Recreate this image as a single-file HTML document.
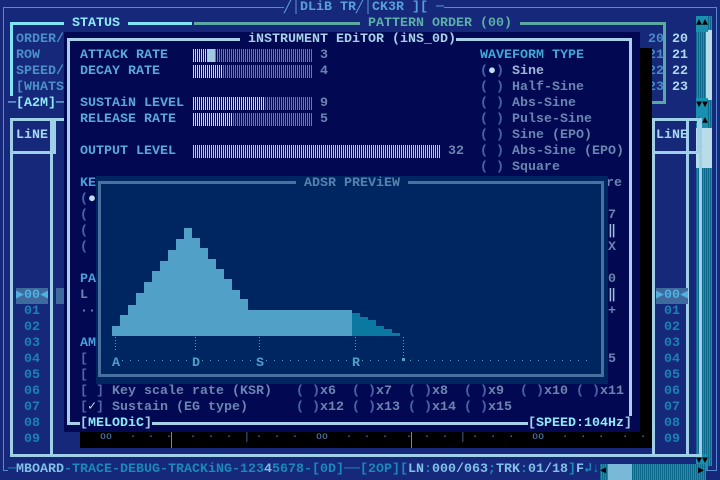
<!DOCTYPE html>
<html><head><meta charset="utf-8"><style>
*{margin:0;padding:0;box-sizing:border-box}
body{width:720px;height:480px;background:#16287a;position:relative;overflow:hidden;font-family:"Liberation Mono","DejaVu Sans Mono",monospace;font-size:13.33px;line-height:16px;font-weight:bold}
.a{position:absolute;white-space:pre}
.b{position:absolute}
.bar{position:absolute;height:13px}
</style></head><body>
<!-- outer frame -->
<div class="b" style="left:3px;top:7px;width:714px;height:464px;border:1px solid #5a88d0"></div>
<div class="a" style="left:284px;top:0;background:#16287a;color:#5aa0d8">╱│DLiB TR╱│CK3R ][ ─</div>
<!-- status box -->
<div class="b" style="left:10px;top:22px;width:180px;height:82px;border:3px solid #80e4f4;border-bottom:none;border-right:none"></div>
<div class="b" style="left:10px;top:22px;width:182px;height:3px;background:#80e4f4"></div>
<div class="a" style="left:64px;top:16px;padding:0 8px;background:#16287a;color:#90e8f8">STATUS</div>
<div class="a" style="left:16px;top:32px;color:#4a90c8">ORDER/
ROW
SPEED/
[WHATS</div>
<div class="a" style="left:8px;top:96px;color:#90e8f8;background:#16287a">─[A2M]─</div>
<!-- pattern order box -->
<div class="b" style="left:194px;top:22px;width:472px;height:82px;border:3px solid #5aa8a0;border-left:none"></div>
<div class="a" style="left:360px;top:16px;padding:0 8px;background:#16287a;color:#5ab0a8">PATTERN ORDER (00)</div>
<div class="a" style="left:648px;top:32px;color:#4a8ac8">20
21
22
23</div>
<div class="a" style="left:672px;top:32px;color:#b0d8f0">20
21
22
23</div>
<!-- right scrollbar -->
<div class="b" style="left:696px;top:16px;width:16px;height:450px;background:repeating-linear-gradient(90deg,#0e6a8c 0 1px,#1a90b0 1px 2px)"></div>
<div class="b" style="left:706px;top:30px;width:6px;height:70px;background:#b8dce8"></div>
<div class="a" style="left:696px;top:16px;font-size:10px;color:#000;background:#1a90b0">▲▲</div>
<div class="a" style="left:696px;top:98px;font-size:10px;color:#000;background:#1a90b0">▼▼</div>
<div class="a" style="left:696px;top:114px;font-size:10px;color:#000;background:#1a90b0">▲▲</div>
<div class="b" style="left:696px;top:128px;width:16px;height:40px;background:#b8dce8"></div>
<div class="a" style="left:696px;top:454px;font-size:10px;color:#000;background:#1a90b0">▼▼</div>
<!-- lower pattern area -->
<div class="b" style="left:10px;top:118px;width:692px;height:339px;border:3px solid #a0d0e8"></div>
<div class="b" style="left:10px;top:118px;width:46px;height:36px;border:3px solid #a0d0e8"></div>
<div class="b" style="left:50px;top:118px;width:3px;height:339px;background:#a0d0e8"></div>
<div class="a" style="left:16px;top:128px;color:#a8d8f0">LiNE</div>
<div class="b" style="left:652px;top:118px;width:48px;height:36px;border:3px solid #a0d0e8"></div>
<div class="b" style="left:652px;top:118px;width:3px;height:339px;background:#a0d0e8"></div>
<div class="b" style="left:686px;top:118px;width:3px;height:339px;background:#a0d0e8"></div>
<div class="a" style="left:656px;top:128px;color:#a8d8f0">LiNE</div>
<div class="b" style="left:16px;top:288px;width:32px;height:16px;background:#3e6a9e"></div>
<div class="a" style="left:16px;top:288px;color:#50b0e0">▶00◀</div>
<div class="a" style="left:24px;top:304px;color:#1a80b8">01
02
03
04
05
06
07
08
09</div>
<div class="b" style="left:656px;top:288px;width:32px;height:16px;background:#3e6a9e"></div>
<div class="a" style="left:656px;top:288px;color:#50b0e0">▶00◀</div>
<div class="a" style="left:664px;top:304px;color:#1a80b8">01
02
03
04
05
06
07
08
09</div>
<div class="b" style="left:56px;top:288px;width:8px;height:16px;background:#3e6a9e"></div>
<!-- shadows -->
<div class="b" style="left:640px;top:48px;width:12px;height:400px;background:#000"></div>
<div class="b" style="left:80px;top:432px;width:572px;height:16px;background:#000"></div>
<div class="a" style="left:88px;top:430px;color:#5a88c8;font-size:10px;font-weight:normal">  oo   ·  ·  ·   ·  ·  ·  │ ·  ·  ·   oo   ·  ·  ·   ·  ·  ·  │ ·  ·  ·   oo   ·  ·  ·   ·  ·</div>
<div class="b" style="left:171px;top:432px;width:1px;height:16px;background:#5a88c8"></div>
<div class="b" style="left:411px;top:432px;width:1px;height:16px;background:#5a88c8"></div>
<!-- dialog -->
<div class="b" style="left:64px;top:32px;width:576px;height:400px;background:#020852"></div>
<div class="b" style="left:67px;top:38px;width:3px;height:387px;background:#a8d0e8"></div>
<div class="b" style="left:67px;top:38px;width:173px;height:3px;background:#a8d0e8"></div>
<div class="b" style="left:432px;top:38px;width:200px;height:3px;background:#a8d0e8"></div>
<div class="b" style="left:629px;top:38px;width:3px;height:387px;background:#a8d0e8"></div>
<div class="b" style="left:67px;top:422px;width:565px;height:3px;background:#a8d0e8"></div>
<div class="a" style="left:248px;top:32px;color:#a8d0e8;background:#020852">iNSTRUMENT EDiTOR (iNS_0D)</div>
<div class="a" style="left:80px;top:48px;color:#5aa8d8">ATTACK RATE
DECAY RATE

SUSTAiN LEVEL
RELEASE RATE

OUTPUT LEVEL</div>
<div class="bar" style="left:193px;top:49px;width:120px;background:repeating-linear-gradient(90deg,#5a7ec0 0 1px,transparent 1px 2px)"></div>
<div class="bar" style="left:193px;top:49px;width:14px;background:repeating-linear-gradient(90deg,#c0d8f0 0 1px,transparent 1px 2px)"></div>
<div class="bar" style="left:207px;top:49px;width:8px;background:#a0c8e0"></div>
<div class="bar" style="left:193px;top:65px;width:120px;background:repeating-linear-gradient(90deg,#5a7ec0 0 1px,transparent 1px 2px)"></div>
<div class="bar" style="left:193px;top:65px;width:30px;background:repeating-linear-gradient(90deg,#c0d8f0 0 1px,transparent 1px 2px)"></div>
<div class="bar" style="left:193px;top:97px;width:120px;background:repeating-linear-gradient(90deg,#5a7ec0 0 1px,transparent 1px 2px)"></div>
<div class="bar" style="left:193px;top:97px;width:72px;background:repeating-linear-gradient(90deg,#c0d8f0 0 1px,transparent 1px 2px)"></div>
<div class="bar" style="left:193px;top:113px;width:120px;background:repeating-linear-gradient(90deg,#5a7ec0 0 1px,transparent 1px 2px)"></div>
<div class="bar" style="left:193px;top:113px;width:40px;background:repeating-linear-gradient(90deg,#c0d8f0 0 1px,transparent 1px 2px)"></div>
<div class="bar" style="left:193px;top:145px;width:248px;background:repeating-linear-gradient(90deg,#b0ccec 0 1px,transparent 1px 2px)"></div>
<div class="a" style="left:320px;top:48px;color:#6a86b0">3
4

9
5</div>
<div class="a" style="left:448px;top:144px;color:#6a86b0">32</div>
<div class="a" style="left:480px;top:48px;color:#40a8d8">WAVEFORM TYPE</div>
<div class="a" style="left:480px;top:64px;color:#4a68a8">(<span style="color:#c0e0f0">●</span>)
( )
( )
( )
( )
( )
( )</div>
<div class="a" style="left:512px;top:64px;color:#6a86b0"><span style="color:#a0b8d8">Sine</span>
Half-Sine
Abs-Sine
Pulse-Sine
Sine (EPO)
Abs-Sine (EPO)
Square</div>
<div class="a" style="left:80px;top:176px;color:#4aa0d8">KE</div>
<div class="a" style="left:80px;top:192px;color:#4a68a8">(<span style="color:#c0e0f0">●</span>
(
(
(</div>
<div class="a" style="left:80px;top:272px;color:#4aa0d8">PA</div>
<div class="a" style="left:80px;top:288px;color:#6a86b0">L
··</div>
<div class="a" style="left:80px;top:336px;color:#4aa0d8">AM</div>
<div class="a" style="left:80px;top:352px;color:#4a68a8">[
[</div>
<div class="a" style="left:80px;top:384px;color:#4a68a8">[ ] <span style="color:#6a86b0">Key scale rate (KSR)</span>   ( )<span style="color:#6a86b0">x6</span>  ( )<span style="color:#6a86b0">x7</span>  ( )<span style="color:#6a86b0">x8</span>  ( )<span style="color:#6a86b0">x9</span>  ( )<span style="color:#6a86b0">x10</span> ( )<span style="color:#6a86b0">x11</span>
[<span style="color:#c0e0f0">✓</span>] <span style="color:#6a86b0">Sustain (EG type)</span>      ( )<span style="color:#6a86b0">x12</span> ( )<span style="color:#6a86b0">x13</span> ( )<span style="color:#6a86b0">x14</span> ( )<span style="color:#6a86b0">x15</span></div>
<div class="a" style="left:80px;top:416px;color:#a8d0e8;background:#020852">[<span style="color:#90e8f8">MELODiC</span>]</div>
<div class="a" style="left:528px;top:416px;color:#a8d0e8;background:#020852">[<span style="color:#90e8f8">SPEED</span>:<span style="color:#90e8f8">104Hz</span>]</div>
<div class="a" style="left:606px;top:176px;color:#6a86b0">re</div>
<div class="a" style="left:608px;top:208px;color:#6a86b0">7
<span style="color:#a0c0e0">‖</span>
X

0
<span style="color:#a0c0e0">‖</span>
+


5</div>
<!-- ADSR -->
<div class="b" style="left:96px;top:176px;width:512px;height:208px;background:#002662"></div>
<div class="b" style="left:98px;top:181px;width:3px;height:196px;background:#4a70a0"></div>
<div class="b" style="left:98px;top:181px;width:198px;height:3px;background:#4a70a0"></div>
<div class="b" style="left:408px;top:181px;width:196px;height:3px;background:#4a70a0"></div>
<div class="b" style="left:601px;top:181px;width:3px;height:196px;background:#4a70a0"></div>
<div class="b" style="left:98px;top:374px;width:506px;height:3px;background:#4a70a0"></div>
<div class="a" style="left:304px;top:176px;color:#5a80b0">ADSR PREViEW</div>
<svg class="b" style="left:0;top:0" width="720" height="480">
<path fill="#50a0c8" d="M112 336V326H120V315H128V305H136V293H144V282H152V271H160V261H168V250H176V239H184V228H192V238H200V248H208V259H216V269H224V279H232V290H240V299H248V310H352V336Z"/>
<path fill="#0a78a0" d="M352 336V313H360V317H368V320H376V326H384V329H392V333H400V336Z"/>
<g stroke="#50a0c8" stroke-dasharray="1 2" stroke-width="1">
<line x1="115.5" y1="337" x2="115.5" y2="352"/><line x1="195.5" y1="337" x2="195.5" y2="352"/><line x1="259.5" y1="337" x2="259.5" y2="352"/><line x1="355.5" y1="337" x2="355.5" y2="352"/><line x1="403.5" y1="337" x2="403.5" y2="358"/>
<line x1="122" y1="360.5" x2="590" y2="360.5" stroke-dasharray="1 7"/>
</g>
<rect x="402" y="358" width="3" height="3" fill="#50a0c8"/>
<text x="112" y="366" fill="#50a0c8" font-family="Liberation Mono" font-weight="bold" font-size="13.33">A</text>
<text x="192" y="366" fill="#50a0c8" font-family="Liberation Mono" font-weight="bold" font-size="13.33">D</text>
<text x="256" y="366" fill="#50a0c8" font-family="Liberation Mono" font-weight="bold" font-size="13.33">S</text>
<text x="352" y="366" fill="#50a0c8" font-family="Liberation Mono" font-weight="bold" font-size="13.33">R</text>
</svg>
<!-- bottom status -->
<div class="a" style="left:8px;top:462px;color:#1a88b8;background:#16287a">─<span style="color:#80c0e8">MBOARD</span>-TRACE-DEBUG-TRACKiNG-123<span style="color:#80c0e8">4</span>5678-[0D]──[2OP][<span style="color:#80c0e8">LN</span>:<span style="color:#80c0e8">000/063</span>;<span style="color:#80c0e8">TRK</span>:<span style="color:#80c0e8">01/18</span>]<span style="color:#80c0e8">F</span>↲↓</div>
<div class="b" style="left:600px;top:464px;width:106px;height:16px;background:repeating-linear-gradient(90deg,#0e6a8c 0 1px,#1a90b0 1px 2px)"></div>
<div class="b" style="left:608px;top:464px;width:24px;height:16px;background:#7ab8d8"></div>
<div class="a" style="left:600px;top:464px;color:#000;font-size:10px">◀</div>
<div class="a" style="left:698px;top:464px;color:#000;font-size:10px">▶</div>
</body></html>
